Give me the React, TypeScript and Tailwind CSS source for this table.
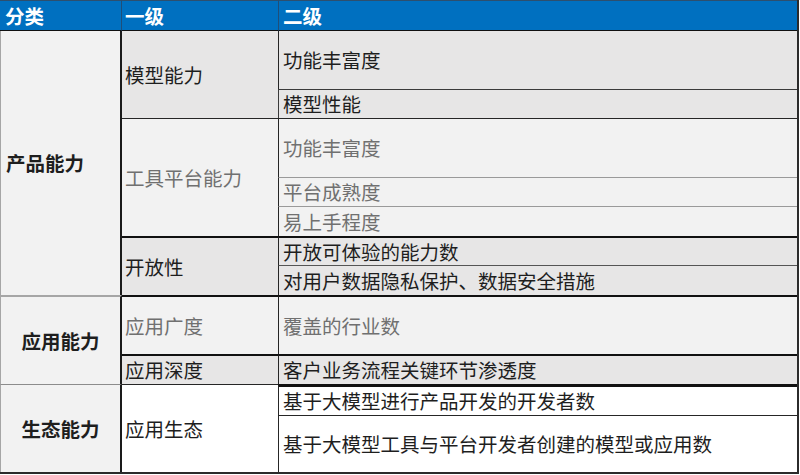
import type { ReactNode } from 'react';

type CellProps = {
  pos: string;
  className?: string;
  children: ReactNode;
};

function Cell({ pos, className = '', children }: CellProps) {
  return <div className={`flex items-center leading-none ${pos} ${className}`}>{children}</div>;
}

const dark = 'bg-[#e7e6e6] text-[#1e1e1e]';
const light = 'bg-[#f2f2f2] text-[#707070]';
const plain = 'bg-white text-[#1e1e1e]';

export default function App() {
  return (
    <div
      className="w-[800px] h-[475px] bg-white overflow-hidden"
      style={{ fontFamily: '"Noto Sans CJK SC", "Noto Sans", sans-serif' }}
    >
      <div className="w-[799px] grid grid-cols-[122px_156px_1fr] grid-rows-[31px_58px_29px_59px_29px_30px_29px_30px_59px_30px_31px_57px] border-r-2 border-b-2 border-[#2b2b2b] text-[19.5px]">
        {/* Header */}
        <Cell pos="col-start-1 row-start-1" className="bg-[#0070c0] text-white font-bold pl-[5px] border-t border-[#2d4f6e] border-b border-b-[#111] border-r border-r-[#1f4e79]">
          分类
        </Cell>
        <Cell pos="col-start-2 row-start-1" className="bg-[#0070c0] text-white font-bold pl-[3px] border-t border-[#2d4f6e] border-b border-b-[#111]">
          一级
        </Cell>
        <Cell pos="col-start-3 row-start-1" className="bg-[#0070c0] text-white font-bold pl-[4px] border-t border-[#2d4f6e] border-b border-b-[#111] border-l border-l-[#1f4e79]">
          二级
        </Cell>

        {/* 分类 */}
        <Cell pos="col-start-1 row-start-2 row-span-7" className="bg-[#f2f2f2] text-[#1e1e1e] font-bold pl-[5px] border-l border-[#a6a6a6] border-r-2 border-r-[#1a1a1a]">
          产品能力
        </Cell>
        <Cell pos="col-start-1 row-start-9 row-span-2" className="bg-[#f2f2f2] text-[#1e1e1e] font-bold justify-center border-l border-[#a6a6a6] border-t-2 border-r-2 border-r-[#1a1a1a]">
          应用能力
        </Cell>
        <Cell pos="col-start-1 row-start-11 row-span-2" className="bg-[#f2f2f2] text-[#1e1e1e] font-bold justify-center border-l border-[#a6a6a6] border-t border-t-[#8c8c8c] border-r-2 border-r-[#1a1a1a]">
          生态能力
        </Cell>

        {/* 一级 */}
        <Cell pos="col-start-2 row-start-2 row-span-2" className={`${dark} pl-[3px]`}>
          模型能力
        </Cell>
        <Cell pos="col-start-2 row-start-4 row-span-3" className={`${light} pl-[3px] border-t border-[#262626]`}>
          工具平台能力
        </Cell>
        <Cell pos="col-start-2 row-start-7 row-span-2" className={`${dark} pl-[3px] border-t-2 border-[#111]`}>
          开放性
        </Cell>
        <Cell pos="col-start-2 row-start-9" className={`${light} pl-[3px] border-t-2 border-[#111]`}>
          应用广度
        </Cell>
        <Cell pos="col-start-2 row-start-10" className={`${dark} pl-[3px] border-t-2 border-[#111]`}>
          应用深度
        </Cell>
        <Cell pos="col-start-2 row-start-11 row-span-2" className={`${plain} pl-[3px] border-t border-[#262626]`}>
          应用生态
        </Cell>

        {/* 二级 */}
        <Cell pos="col-start-3 row-start-2" className={`${dark} pl-[4px] border-l border-[#262626]`}>
          功能丰富度
        </Cell>
        <Cell pos="col-start-3 row-start-3" className={`${dark} pl-[4px] border-l border-t border-[#3a3a3a]`}>
          模型性能
        </Cell>
        <Cell pos="col-start-3 row-start-4" className={`${light} pl-[4px] border-l border-t border-[#262626]`}>
          功能丰富度
        </Cell>
        <Cell pos="col-start-3 row-start-5" className={`${light} pl-[4px] border-l border-[#262626] border-t border-t-[#9a9a9a]`}>
          平台成熟度
        </Cell>
        <Cell pos="col-start-3 row-start-6" className={`${light} pl-[4px] border-l border-[#262626] border-t border-t-[#9a9a9a]`}>
          易上手程度
        </Cell>
        <Cell pos="col-start-3 row-start-7" className={`${dark} pl-[4px] border-l border-[#262626] border-t-2 border-t-[#111]`}>
          开放可体验的能力数
        </Cell>
        <Cell pos="col-start-3 row-start-8" className={`${dark} pl-[4px] border-l border-[#262626] border-t border-t-[#555]`}>
          对用户数据隐私保护、数据安全措施
        </Cell>
        <Cell pos="col-start-3 row-start-9" className={`${light} pl-[4px] border-l border-[#262626] border-t-2 border-t-[#111]`}>
          覆盖的行业数
        </Cell>
        <Cell pos="col-start-3 row-start-10" className={`${dark} pl-[4px] border-l border-[#262626] border-t-2 border-t-[#111]`}>
          客户业务流程关键环节渗透度
        </Cell>
        <Cell pos="col-start-3 row-start-11" className={`${plain} pl-[4px] border-l border-[#262626] border-t-[3px] border-t-[#111]`}>
          基于大模型进行产品开发的开发者数
        </Cell>
        <Cell pos="col-start-3 row-start-12" className={`${plain} pl-[4px] border-l border-[#262626] border-t border-t-[#262626]`}>
          基于大模型工具与平台开发者创建的模型或应用数
        </Cell>
      </div>
    </div>
  );
}
